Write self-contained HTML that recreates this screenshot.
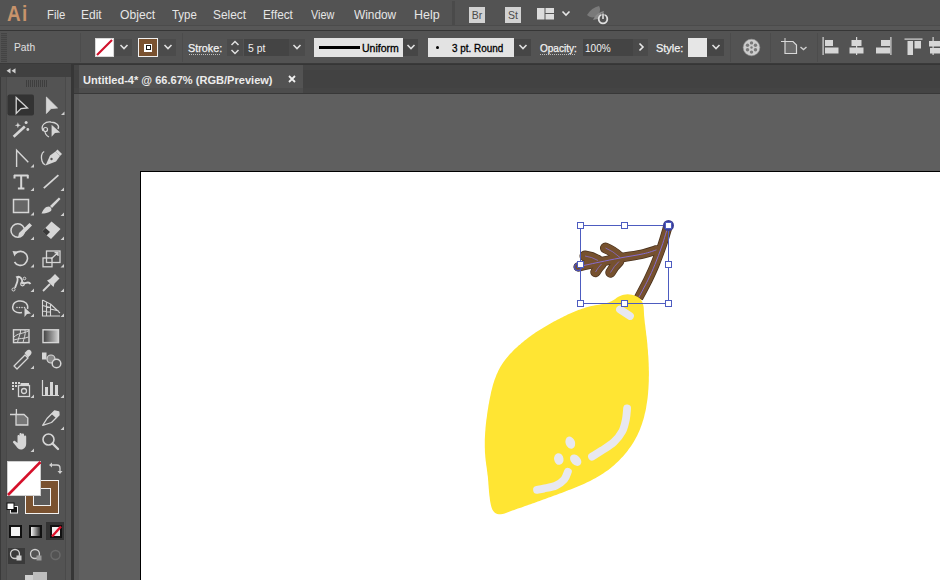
<!DOCTYPE html>
<html><head><meta charset="utf-8">
<style>
*{margin:0;padding:0;box-sizing:border-box}
html,body{width:940px;height:580px;overflow:hidden;background:#535353;font-family:"Liberation Sans",sans-serif}
.a{position:absolute}
.tx{position:absolute;white-space:nowrap;transform-origin:0 0;font-family:"Liberation Sans",sans-serif}
#menu{left:0;top:0;width:940px;height:25px;background:#535353}
.mi{position:absolute;top:7px;font-size:12.5px;color:#e6e6e6;line-height:14px;white-space:nowrap}
#ctrl{left:0;top:31px;width:940px;height:33px;background:#535353}
.lbl{position:absolute;font-size:11px;color:#e8e8e8;line-height:12px;white-space:nowrap}
.dd{position:absolute;top:39px;height:17px;background:#4b4b4b}
#tabbar{left:74px;top:64px;width:866px;height:30px;background:#424242}
#canvas{left:79px;top:94px;width:861px;height:486px;background:#5f5f5f}
#tools{left:0;top:64px;width:74px;height:516px;background:#535353}
</style></head><body>
<!-- menu bar -->
<div class="a" id="menu"></div>
<div class="a" style="left:0;top:25px;width:940px;height:1px;background:#4b4b4b"></div>
<div class="a" style="left:0;top:26px;width:940px;height:4px;background:#575757"></div>
<div class="a" style="left:0;top:30px;width:940px;height:1px;background:#363636"></div>

<div class="tx" id="ailogo" style="left:7px;top:1.5px;font-size:22px;line-height:24px;font-weight:bold;color:#c8936b;letter-spacing:1.5px;transform:scaleX(0.86)">Ai</div>
<div class="a" style="left:452px;top:1px;width:3px;height:24px;background:#4a4a4a"></div>
<div class="a" style="left:469px;top:7px;width:16px;height:16px;background:#d2d2d2"></div>
<div class="a" style="left:470px;top:9px;width:14px;font-size:10.5px;color:#4a4a4a;text-align:center;line-height:12px">Br</div>
<div class="a" style="left:505px;top:7px;width:16px;height:16px;background:#d2d2d2"></div>
<div class="a" style="left:505.5px;top:9px;width:15px;font-size:10.5px;color:#4a4a4a;text-align:center;line-height:12px">St</div>
<svg class="a" style="left:536px;top:7px" width="40" height="14" viewBox="0 0 40 14"><rect x="1" y="1" width="7.5" height="11.5" fill="#dcdcdc"/><rect x="9.5" y="1" width="8.5" height="5" fill="#dcdcdc"/><rect x="9.5" y="7" width="8.5" height="5.5" fill="#dcdcdc"/><path d="M26.5 4.5 L30 8 L33.5 4.5" stroke="#e6e6e6" stroke-width="1.6" fill="none"/></svg>
<svg class="a" style="left:584px;top:2px" width="26" height="24" viewBox="0 0 26 24"><path d="M3 13 C6 8 10 5 15 4 C17 7 16 11 13 14 C10 16 6 16 3 13 Z" fill="#7a7a7a"/><path d="M9 18 C11 13 15 10 20 9 L18 16 Z" fill="#8a8a8a"/><circle cx="19" cy="17" r="4.3" stroke="#e0e0e0" stroke-width="1.8" fill="#535353"/><line x1="19" y1="11" x2="19" y2="17" stroke="#535353" stroke-width="3"/><line x1="19" y1="11.5" x2="19" y2="17" stroke="#e0e0e0" stroke-width="1.6"/></svg>
<div class="tx" style="left:46.89px;top:8.00px;font-size:12.5px;line-height:14.5px;color:#e6e6e6;transform:scaleX(0.905)">File</div>
<div class="tx" style="left:81.44px;top:8.00px;font-size:12.5px;line-height:14.5px;color:#e6e6e6;transform:scaleX(0.957)">Edit</div>
<div class="tx" style="left:119.50px;top:8.00px;font-size:12.5px;line-height:14.5px;color:#e6e6e6;transform:scaleX(0.972)">Object</div>
<div class="tx" style="left:171.50px;top:8.00px;font-size:12.5px;line-height:14.5px;color:#e6e6e6;transform:scaleX(0.915)">Type</div>
<div class="tx" style="left:212.75px;top:8.00px;font-size:12.5px;line-height:14.5px;color:#e6e6e6;transform:scaleX(0.950)">Select</div>
<div class="tx" style="left:263.06px;top:8.00px;font-size:12.5px;line-height:14.5px;color:#e6e6e6;transform:scaleX(0.942)">Effect</div>
<div class="tx" style="left:310.80px;top:8.00px;font-size:12.5px;line-height:14.5px;color:#e6e6e6;transform:scaleX(0.867)">View</div>
<div class="tx" style="left:353.60px;top:8.00px;font-size:12.5px;line-height:14.5px;color:#e6e6e6;transform:scaleX(0.949)">Window</div>
<div class="tx" style="left:414.00px;top:8.00px;font-size:12.5px;line-height:14.5px;color:#e6e6e6;transform:scaleX(1.000)">Help</div>

<!-- control bar -->
<div class="a" id="ctrl"></div>
<div class="a" style="left:0;top:63px;width:940px;height:1px;background:#3a3a3a"></div>
<div class="a" style="left:1px;top:33px;width:6px;height:29px;background:repeating-linear-gradient(#444 0 1px,#4f4f4f 1px 2px)"></div>
<div class="tx" style="left:14.27px;top:41.80px;font-size:10px;line-height:12px;color:#e0e0e0;transform:scaleX(1.026)">Path</div>
<div class="a" style="left:80px;top:33px;width:1px;height:29px;background:#4c4c4c"></div>
<!-- fill swatch -->
<div class="a" style="left:95px;top:38px;width:19px;height:19px;background:#fff;border:1px solid #d8d8d8;overflow:hidden"></div>
<svg class="a" style="left:95px;top:38px" width="19" height="19"><line x1="2" y1="17" x2="17" y2="2" stroke="#d0112b" stroke-width="2.2"/></svg>
<div class="dd" style="left:115px;width:17px"></div>
<svg class="a" style="left:118.5px;top:43px" width="10" height="8" viewBox="0 0 10 8"><path d="M1.5 2 L5 5.5 L8.5 2" stroke="#e0e0e0" stroke-width="1.6" fill="none"/></svg>
<!-- stroke swatch -->
<div class="a" style="left:138px;top:38px;width:20px;height:19px;background:#7a5230;border:1px solid #f0f0f0"></div>
<div class="a" style="left:144px;top:43.5px;width:8px;height:8px;background:#fff"></div>
<div class="a" style="left:145.5px;top:45px;width:5px;height:5px;background:#1a1a1a"></div>
<div class="a" style="left:146.5px;top:46px;width:3px;height:3px;background:#fff"></div>
<div class="dd" style="left:159px;width:17px"></div>
<svg class="a" style="left:162.5px;top:43px" width="10" height="8" viewBox="0 0 10 8"><path d="M1.5 2 L5 5.5 L8.5 2" stroke="#e0e0e0" stroke-width="1.6" fill="none"/></svg>
<div class="a" style="left:182px;top:33px;width:1px;height:29px;background:#4c4c4c"></div>
<div class="tx" style="left:187.57px;top:42.30px;font-size:10.5px;line-height:12.5px;color:#f2f2f2;-webkit-text-stroke:0.25px #f2f2f2;transform:scaleX(1.029)">Stroke:</div>
<div class="a" style="left:189px;top:54px;width:32px;height:1px;background:repeating-linear-gradient(90deg,#bdbdbd 0 1px,transparent 1px 2px)"></div>
<div class="dd" style="left:227px;width:16px;background:#4b4b4b"></div>
<svg class="a" style="left:227px;top:38px" width="16" height="19" viewBox="0 0 16 19"><path d="M4.5 7 L8 3.5 L11.5 7" stroke="#e0e0e0" stroke-width="1.5" fill="none"/><path d="M4.5 12 L8 15.5 L11.5 12" stroke="#e0e0e0" stroke-width="1.5" fill="none"/></svg>
<div class="dd" style="left:244px;width:45px;background:#444"></div>
<div class="tx" style="left:248.20px;top:41.70px;font-size:10.5px;line-height:12.5px;color:#f0f0f0;transform:scaleX(0.988)">5 pt</div>
<div class="dd" style="left:289px;width:16px"></div>
<svg class="a" style="left:292px;top:43px" width="10" height="8" viewBox="0 0 10 8"><path d="M1.5 2 L5 5.5 L8.5 2" stroke="#e0e0e0" stroke-width="1.6" fill="none"/></svg>
<!-- uniform -->
<div class="a" style="left:314px;top:38px;width:89px;height:19px;background:#e3e3e3"></div>
<div class="a" style="left:319px;top:46px;width:41px;height:3px;background:#000"></div>
<div class="tx" style="left:362.30px;top:41.70px;font-size:10.5px;line-height:12.5px;color:#000;-webkit-text-stroke:0.3px #000;transform:scaleX(1.003)">Uniform</div>
<div class="dd" style="left:403px;width:15px;background:#464646"></div>
<svg class="a" style="left:405.5px;top:43px" width="10" height="8" viewBox="0 0 10 8"><path d="M1.5 2 L5 5.5 L8.5 2" stroke="#e0e0e0" stroke-width="1.6" fill="none"/></svg>
<!-- round -->
<div class="a" style="left:428px;top:38px;width:86px;height:19px;background:#e3e3e3"></div>
<div class="a" style="left:436px;top:46px;width:3px;height:3px;background:#000;border-radius:1.5px"></div>
<div class="tx" style="left:452.00px;top:41.70px;font-size:10.5px;line-height:12.5px;color:#000;-webkit-text-stroke:0.3px #000;transform:scaleX(0.944)">3 pt. Round</div>
<div class="dd" style="left:514px;width:17px;background:#464646"></div>
<svg class="a" style="left:517.5px;top:43px" width="10" height="8" viewBox="0 0 10 8"><path d="M1.5 2 L5 5.5 L8.5 2" stroke="#e0e0e0" stroke-width="1.6" fill="none"/></svg>
<div class="tx" style="left:539.70px;top:42.00px;font-size:10.5px;line-height:12.5px;color:#f2f2f2;-webkit-text-stroke:0.25px #f2f2f2;transform:scaleX(0.953)">Opacity:</div>
<div class="a" style="left:540px;top:54px;width:36px;height:1px;background:repeating-linear-gradient(90deg,#bdbdbd 0 1px,transparent 1px 2px)"></div>
<div class="dd" style="left:583px;width:50px;background:#444"></div>
<div class="tx" style="left:585.34px;top:41.70px;font-size:10.5px;line-height:12.5px;color:#f0f0f0;transform:scaleX(0.958)">100%</div>
<div class="dd" style="left:633px;width:15px;background:#4a4a4a"></div>
<svg class="a" style="left:636px;top:42px" width="10" height="10" viewBox="0 0 10 10"><path d="M3.5 1.5 L7 5 L3.5 8.5" stroke="#e8e8e8" stroke-width="1.6" fill="none"/></svg>
<div class="tx" style="left:655.66px;top:42.00px;font-size:10.5px;line-height:12.5px;color:#f2f2f2;-webkit-text-stroke:0.25px #f2f2f2;transform:scaleX(1.037)">Style:</div>
<div class="a" style="left:688px;top:38px;width:19px;height:19px;background:#e6e6e6"></div>
<div class="dd" style="left:707px;width:17px;background:#464646"></div>
<svg class="a" style="left:710.5px;top:43px" width="10" height="8" viewBox="0 0 10 8"><path d="M1.5 2 L5 5.5 L8.5 2" stroke="#e0e0e0" stroke-width="1.6" fill="none"/></svg>
<div class="a" style="left:730px;top:33px;width:1px;height:29px;background:#4c4c4c"></div>
<svg class="a" style="left:742px;top:38px" width="19" height="19" viewBox="0 0 19 19"><circle cx="9.5" cy="9.5" r="8.3" fill="#cdcdcd"/><circle cx="9.5" cy="9.5" r="8.3" fill="none" stroke="#9a9a9a" stroke-width="0.6"/><circle cx="9.50" cy="4.90" r="1.7" fill="#7a7a7a"/><circle cx="13.48" cy="7.20" r="1.7" fill="#7a7a7a"/><circle cx="13.48" cy="11.80" r="1.7" fill="#7a7a7a"/><circle cx="9.50" cy="14.10" r="1.7" fill="#7a7a7a"/><circle cx="5.52" cy="11.80" r="1.7" fill="#7a7a7a"/><circle cx="5.52" cy="7.20" r="1.7" fill="#7a7a7a"/><circle cx="9.5" cy="9.5" r="1.2" fill="#7a7a7a"/></svg>
<div class="a" style="left:770px;top:33px;width:1px;height:29px;background:#4c4c4c"></div>
<svg class="a" style="left:780px;top:37px" width="30" height="20" viewBox="0 0 30 20"><path d="M5 4.5 H13 L16.5 8 V16.5 H5 Z" fill="#6a6a6a" stroke="#d8d8d8" stroke-width="1.2"/><line x1="1" y1="4.5" x2="5" y2="4.5" stroke="#d8d8d8" stroke-width="1"/><line x1="5" y1="1" x2="5" y2="4.5" stroke="#d8d8d8" stroke-width="1"/><path d="M20.5 10 L23.5 12.5 L26.5 10" stroke="#d0d0d0" stroke-width="1.4" fill="none"/></svg>
<div class="a" style="left:817px;top:33px;width:1px;height:29px;background:#4c4c4c"></div>
<svg class="a" style="left:820px;top:36px" width="120" height="22" viewBox="0 0 120 22">
<g fill="#d6d6d6">
<rect x="2.5" y="1" width="1.2" height="18"/><rect x="5" y="4" width="8" height="6"/><rect x="5" y="11.5" width="13.5" height="6"/>
<rect x="36" y="1" width="1.2" height="18"/><rect x="31.5" y="4" width="10" height="6"/><rect x="29.5" y="11.5" width="14" height="6"/>
<rect x="70.3" y="1" width="1.2" height="18"/><rect x="61" y="4" width="9" height="6"/><rect x="56" y="11.5" width="14" height="6"/>
<rect x="84.5" y="2.5" width="18" height="1.2"/><rect x="87.5" y="5" width="5.5" height="14"/><rect x="94.5" y="5" width="6.5" height="7.5"/>
<rect x="112.5" y="1" width="1.2" height="18"/><rect x="109" y="5" width="11" height="5.5"/><rect x="110" y="12" width="10" height="5.5"/>
</g></svg>
<!-- tools panel -->
<div class="a" id="tools"></div>
<div class="a" style="left:0;top:64px;width:72px;height:13px;background:#404040"></div>
<svg class="a" style="left:5px;top:67px" width="12" height="8" viewBox="0 0 12 8"><path d="M1.5 3.8 L5.5 1.2 V6.4 Z M6.5 3.8 L10.5 1.2 V6.4 Z" fill="#d0d0d0"/></svg>
<div class="a" style="left:25.5px;top:80px;width:21px;height:7px;background:repeating-linear-gradient(90deg,#3e3e3e 0 1px,transparent 1px 2px)"></div>
<div class="a" style="left:0;top:77px;width:1px;height:503px;background:#3a3a3a"></div>
<div class="a" style="left:1px;top:77px;width:5px;height:503px;background:#4e4e4e"></div>
<div class="a" style="left:6px;top:77px;width:1px;height:503px;background:#484848"></div>
<div class="a" style="left:65px;top:77px;width:1px;height:503px;background:#4a4a4a"></div>
<div class="a" style="left:66px;top:77px;width:5px;height:503px;background:#555"></div>
<div class="a" style="left:71px;top:64px;width:3px;height:516px;background:#363636"></div>
<div class="a" style="left:74px;top:64px;width:5px;height:516px;background:#575757"></div>
<svg class="a" style="left:0;top:0" width="74" height="580" viewBox="0 0 74 580">
<rect x="7.5" y="94.5" width="26.5" height="21" rx="2" fill="#333"/>
<path d="M16.2 97.5 L27.5 108 L21 108.6 L16.2 113.5 Z" fill="#2a2a2a" stroke="#d6d6d6" stroke-width="1.3" stroke-linejoin="miter"/>
<path d="M46.4 97 L57.5 108 L51 108.6 L46.4 113.5 Z" fill="#d6d6d6" stroke="#d6d6d6" stroke-width="0.8"/>
<path d="M61 115 L64.5 115 L64.5 111.5 Z" fill="#cfcfcf"/>
<line x1="13.6" y1="136.8" x2="24.8" y2="126.5" stroke="#d6d6d6" stroke-width="2.6"/>
<path d="M17.9 122.2 L18.7 124.4 L21 125.2 L18.7 126 L17.9 128.2 L17.1 126 L14.8 125.2 L17.1 124.4 Z" fill="#d6d6d6"/>
<circle cx="26.1" cy="122.6" r="1.5" fill="#d6d6d6"/><circle cx="27.8" cy="129.5" r="1.4" fill="#d6d6d6"/>
<path d="M43 131 C40 125 46 121 51 122 C56 122.5 60 125 58 129" stroke="#d6d6d6" stroke-width="1.3" fill="none"/>
<circle cx="45.5" cy="129.5" r="2" stroke="#d6d6d6" stroke-width="1.2" fill="none"/>
<path d="M45 131 C45 134 47 136 49 137" stroke="#d6d6d6" stroke-width="1.2" fill="none"/>
<path d="M51.6 124.8 L60.2 132.5 L55 133 L51.6 136.8 Z" fill="#d6d6d6"/>
<path d="M16.6 167 L16.6 150.2 L28.3 162.3" stroke="#d6d6d6" stroke-width="1.4" fill="none"/>
<path d="M30.5 167.5 L34.0 167.5 L34.0 164.0 Z" fill="#cfcfcf"/>
<path d="M44.2 151.5 C41 153 41 158 42 161 C42.5 163 44 164.5 45.5 165" stroke="#d6d6d6" stroke-width="1.3" fill="none"/>
<path d="M45.5 165.5 L50 155.5 L55.5 151.5 L60 156 L56 161.5 Z" fill="#d6d6d6"/>
<path d="M55.5 151.5 L57.5 149.5 L62 154 L60 156 Z" fill="#d6d6d6"/>
<circle cx="51.5" cy="159" r="1.2" fill="#555"/>
<path d="M14 175.6 H28.3 M14.5 175 V178.5 M27.8 175 V178.5 M21.2 175.6 V188.6 M17.9 188.6 H24.4" stroke="#d6d6d6" stroke-width="2" fill="none"/>
<path d="M30.5 191 L34.0 191 L34.0 187.5 Z" fill="#cfcfcf"/>
<line x1="43.8" y1="188.1" x2="58.4" y2="175.2" stroke="#d6d6d6" stroke-width="1.8"/>
<path d="M60.5 191 L64.0 191 L64.0 187.5 Z" fill="#cfcfcf"/>
<rect x="13.5" y="199.5" width="15" height="13" fill="#666" stroke="#d6d6d6" stroke-width="1.5"/>
<path d="M30.5 215.5 L34.0 215.5 L34.0 212.0 Z" fill="#cfcfcf"/>
<path d="M50 206 L58.9 197.5 L60.5 199 L52 208 Z" fill="#d6d6d6"/>
<path d="M41.5 213.5 C43 210 45 206.5 49 206.5 C51.5 207 52 209.5 51 211 C48 213 45 213.5 41.5 213.5 Z" fill="#d6d6d6"/>
<path d="M60.5 216 L64.0 216 L64.0 212.5 Z" fill="#cfcfcf"/>
<circle cx="17.8" cy="230.5" r="6.8" stroke="#d6d6d6" stroke-width="1.5" fill="#5c5c5c"/>
<path d="M17.9 237.7 L19 233 L29.5 223 L32 225.5 L21.5 236 Z" fill="#d6d6d6"/>
<path d="M30.5 240 L34.0 240 L34.0 236.5 Z" fill="#cfcfcf"/>
<path d="M42 231.5 L51.5 221.5 L60.5 229 L51 239 Z" fill="#d6d6d6"/>
<path d="M42 231.5 L45.5 228 L50 232 L46.5 235.5 Z" fill="#3a3a3a"/>
<path d="M60.5 240 L64.0 240 L64.0 236.5 Z" fill="#cfcfcf"/>
<path d="M15.5 253.5 A7 7 0 1 1 14.5 262" stroke="#d6d6d6" stroke-width="1.6" fill="none"/>
<path d="M12.5 251 L17.5 251.5 L14.5 256.5 Z" fill="#d6d6d6"/>
<path d="M30.5 267.5 L34.0 267.5 L34.0 264.0 Z" fill="#cfcfcf"/>
<rect x="46.5" y="251" width="13.5" height="11.5" stroke="#d6d6d6" stroke-width="1.3" fill="none"/>
<rect x="43" y="258" width="9" height="8.8" stroke="#d6d6d6" stroke-width="1.3" fill="none"/>
<path d="M51 259 L58 252.5 M54.5 252.5 H58 V256" stroke="#d6d6d6" stroke-width="1.3" fill="none"/>
<path d="M60.5 267.5 L64.0 267.5 L64.0 264.0 Z" fill="#cfcfcf"/>
<path d="M15 288 C17 282 19 280 17 277 C20 276 23 279 22 283 C25 285 28 280 30.5 284" stroke="#d6d6d6" stroke-width="1.8" fill="none"/>
<circle cx="13.5" cy="289.5" r="1.5" stroke="#d6d6d6" stroke-width="1" fill="none"/>
<circle cx="22.5" cy="284" r="1.8" stroke="#d6d6d6" stroke-width="1.2" fill="none"/>
<circle cx="24.5" cy="278.5" r="1.3" stroke="#d6d6d6" stroke-width="1" fill="none"/>
<path d="M30.5 292 L34.0 292 L34.0 288.5 Z" fill="#cfcfcf"/>
<path d="M50 279 L55 274 L59.5 278.5 L54.5 283.5 L53.5 287 L47 280.5 Z" fill="#d6d6d6"/>
<line x1="43" y1="291" x2="50" y2="284" stroke="#d6d6d6" stroke-width="1.8"/>
<path d="M60.5 292 L64.0 292 L64.0 288.5 Z" fill="#cfcfcf"/>
<path d="M22 312.5 C16 314 11.5 310 13 305.5 C14.5 300.5 22 299.5 26 303 C28 305 28 307 27.5 309" stroke="#d6d6d6" stroke-width="1.5" fill="none"/>
<g fill="#d6d6d6"><circle cx="17" cy="307.5" r="0.8"/><circle cx="19.5" cy="307.5" r="0.8"/><circle cx="22" cy="307.5" r="0.8"/><circle cx="24.5" cy="307.5" r="0.8"/></g>
<path d="M24.5 307.5 L31 313.5 L27 314 L24.5 317 Z" fill="#d6d6d6"/>
<path d="M30.5 317 L34.0 317 L34.0 313.5 Z" fill="#cfcfcf"/>
<path d="M42.5 300 V316 H60 M42.5 300 L50.5 304 V316 M42.5 305.5 L50.5 307.5 M42.5 311 L50.5 312 M46.5 302 V316 M50.5 304 L60 313 M50.5 309 L59 311" stroke="#d6d6d6" stroke-width="1.1" fill="none"/>
<path d="M60.5 317 L64.0 317 L64.0 313.5 Z" fill="#cfcfcf"/>
<rect x="13.5" y="329.8" width="15.5" height="12.8" stroke="#d6d6d6" stroke-width="1.4" fill="#5a5a5a"/>
<path d="M14 337 C18 333 22 334 28.5 331 M17.5 342.5 C18 338 21 334 20.5 330 M23 342.5 C23.5 339 26 335 25 330 M14 340 C19 338 24 339 28.5 337" stroke="#d6d6d6" stroke-width="1" fill="none"/>
<defs><linearGradient id="gr" x1="0" x2="1"><stop offset="0" stop-color="#3e3e3e"/><stop offset="1" stop-color="#d0d0d0"/></linearGradient>
<linearGradient id="gr2" x1="0" x2="1"><stop offset="0" stop-color="#f0f0f0"/><stop offset="1" stop-color="#333"/></linearGradient></defs>
<rect x="43" y="329.8" width="15.5" height="12.8" stroke="#d6d6d6" stroke-width="1.4" fill="url(#gr)"/>
<path d="M14 366 L25 355 L28 358 L17 369 Z" stroke="#d6d6d6" stroke-width="1.3" fill="none" stroke-linejoin="round"/>
<path d="M24.5 353 L27 350.5 C28 349.5 30 349.5 31 351 C32 352 31.5 354 30.5 355 L28 357.5 Z" fill="#d6d6d6"/>
<path d="M30.5 369 L34.0 369 L34.0 365.5 Z" fill="#cfcfcf"/>
<rect x="42" y="352.5" width="4.5" height="7" fill="#d6d6d6"/>
<circle cx="51" cy="359" r="4" fill="#888" stroke="#d6d6d6" stroke-width="1.2"/>
<circle cx="56.5" cy="363.5" r="4.3" fill="#555" stroke="#d6d6d6" stroke-width="1.5"/>
<g fill="#d6d6d6"><rect x="12" y="382" width="2" height="2"/><rect x="15" y="382" width="2" height="2"/><rect x="18" y="382" width="2" height="2"/><rect x="12" y="385" width="2" height="2"/><rect x="15" y="385" width="2" height="2"/><rect x="12" y="388" width="2" height="2"/></g>
<rect x="20.5" y="383" width="8.5" height="2.5" fill="#d6d6d6"/>
<rect x="18.5" y="385.5" width="11" height="11" stroke="#d6d6d6" stroke-width="1.3" fill="none"/>
<circle cx="24" cy="391" r="2.5" stroke="#d6d6d6" stroke-width="1.3" fill="none"/>
<path d="M30.5 398 L34.0 398 L34.0 394.5 Z" fill="#cfcfcf"/>
<path d="M42.5 380 V395.5 H59" stroke="#d6d6d6" stroke-width="1.2" fill="none"/>
<rect x="45" y="387" width="3" height="8" fill="#d6d6d6"/><rect x="50" y="382" width="3" height="13" fill="#d6d6d6"/><rect x="55" y="385" width="3" height="10" fill="#d6d6d6"/>
<path d="M60.5 398 L64.0 398 L64.0 394.5 Z" fill="#cfcfcf"/>
<path d="M10 414.5 H16 M16.4 409 V414.5" stroke="#d6d6d6" stroke-width="1.3"/>
<path d="M16 414.5 H24 L27.8 418 V425 H16 Z" fill="#777" stroke="#d6d6d6" stroke-width="1.3"/>
<path d="M42.7 425.3 L47 418.5 L54.5 411 L58.8 412 L59 415 L51.5 422.5 Z" stroke="#d6d6d6" stroke-width="1.3" fill="none" stroke-linejoin="round"/>
<path d="M54.5 411 L58.8 412 L59 415 L56 418 L51.5 414 Z" fill="#d6d6d6"/>
<path d="M60.5 430 L64.0 430 L64.0 426.5 Z" fill="#cfcfcf"/>
<path d="M15 441 L17.5 443 L17.5 436 C17.5 434.5 19.5 434.5 19.5 436 L19.5 440 L19.5 434 C19.5 432.5 21.7 432.5 21.7 434 L21.7 440 L21.7 434.5 C21.7 433 24 433 24 434.5 L24 440.5 L24 436.5 C24 435 26.2 435 26.2 436.5 L26.2 443.5 C26.2 447 24 449.5 21 449.5 C18.5 449.5 17.5 448 16 446 L13 442.5 C12.5 441.5 14 440 15 441 Z" fill="#d6d6d6"/>
<path d="M30.5 452 L34.0 452 L34.0 448.5 Z" fill="#cfcfcf"/>
<circle cx="48.5" cy="439.5" r="5.5" stroke="#d6d6d6" stroke-width="1.6" fill="none"/>
<line x1="52.5" y1="443.5" x2="58" y2="449" stroke="#d6d6d6" stroke-width="2.4" stroke-linecap="round"/>
</svg>
<!-- fill stroke -->
<div class="a" style="left:25px;top:480px;width:34px;height:34px;background:#7a5230;border:1px solid #f2f2f2"></div>
<div class="a" style="left:33px;top:488px;width:18px;height:18px;background:#5a5a5a;border:1px solid #f2f2f2"></div>
<div class="a" style="left:7px;top:461px;width:34px;height:35px;background:#fff;border:1px solid #cfcfcf"></div>
<svg class="a" style="left:7px;top:461px" width="34" height="35"><line x1="1" y1="34" x2="33.5" y2="1" stroke="#d5102a" stroke-width="2.6"/></svg>
<svg class="a" style="left:48px;top:461px" width="16" height="14" viewBox="0 0 16 14"><path d="M3 4 H9 C11 4 12 5 12 7 V11" stroke="#cfcfcf" stroke-width="1.3" fill="none"/><path d="M1 4 L4 1.5 V6.5 Z M9.5 10 H14.5 L12 13 Z" fill="#cfcfcf"/></svg>
<svg class="a" style="left:6px;top:502px" width="13" height="12" viewBox="0 0 13 12"><rect x="4.5" y="4.5" width="7" height="6.5" fill="#111" stroke="#eee" stroke-width="1"/><rect x="1" y="1" width="7" height="6.5" fill="#fff" stroke="#111" stroke-width="1"/></svg>
<div class="a" style="left:9px;top:525px;width:13px;height:13px;background:#f2f2f2;border:2px solid #111"></div>
<div class="a" style="left:29px;top:525px;width:13px;height:13px;background:linear-gradient(90deg,#f4f4f4,#333);border:2px solid #111"></div>
<div class="a" style="left:46px;top:522px;width:18px;height:18px;background:#333"></div>
<div class="a" style="left:49.5px;top:525px;width:12.5px;height:13px;background:#f2f2f2;border:2px solid #111;overflow:hidden"></div>
<svg class="a" style="left:49.5px;top:525px" width="13" height="13"><line x1="2" y1="11.5" x2="11" y2="1.5" stroke="#e0102a" stroke-width="2.4"/></svg>
<div class="a" style="left:7.5px;top:547.5px;width:17.5px;height:16px;background:#3a3a3a"></div>
<svg class="a" style="left:0;top:540px" width="74" height="40" viewBox="0 540 74 40">
<circle cx="15" cy="554" r="4.5" stroke="#d0d0d0" stroke-width="1.3" fill="none"/><rect x="16.5" y="555.5" width="5" height="5" fill="#cfcfcf"/>
<circle cx="35" cy="554" r="4.5" stroke="#d0d0d0" stroke-width="1.3" fill="none"/><rect x="36.5" y="555.5" width="5" height="5" fill="#9a9a9a"/>
<circle cx="55.5" cy="555" r="4.5" stroke="#6a6a6a" stroke-width="1.5" fill="none"/>
<rect x="25" y="575" width="8" height="6" fill="#cfcfcf"/><rect x="33" y="572" width="14" height="9" fill="#bdbdbd"/>
</svg>
<!-- tab bar -->
<div class="a" id="tabbar"></div>
<div class="a" style="left:74px;top:64px;width:866px;height:1px;background:#363636"></div>
<div class="a" style="left:74px;top:65px;width:866px;height:5px;background:#454545"></div>
<div class="a" style="left:74px;top:88px;width:866px;height:5px;background:#444"></div>
<div class="a" style="left:79px;top:65px;width:224px;height:23px;background:#535353"></div>
<div class="a" style="left:79px;top:88px;width:224px;height:5px;background:#4d4d4d"></div>
<div class="a" style="left:74px;top:93px;width:866px;height:1px;background:#383838"></div>
<div class="tx" style="left:83.40px;top:73.70px;font-size:11px;line-height:13px;font-weight:bold;color:#ececec;transform:scaleX(1.005)">Untitled-4* @ 66.67% (RGB/Preview)</div>
<svg class="a" style="left:288px;top:75px" width="8" height="8" viewBox="0 0 8 8"><path d="M1 1 L7 7 M7 1 L1 7" stroke="#f0f0f0" stroke-width="1.8"/></svg>
<!-- canvas -->
<div class="a" id="canvas"></div>
<div class="a" style="left:140px;top:171px;width:800px;height:409px;background:#fff;border-left:1px solid #000;border-top:1px solid #000"></div>

<svg class="a" style="left:0;top:0" width="940" height="580" viewBox="0 0 940 580">



<g stroke="#4a321e" stroke-width="9.5" stroke-linecap="round" fill="none"><path d="M668.0 226.0 C667.0 229.3 664.1 239.6 661.9 246.0 C659.7 252.4 657.2 258.9 654.9 264.6 C652.6 270.3 650.5 274.7 647.9 280.1 C645.2 285.5 640.5 294.2 638.5 298" stroke-linecap="butt"/>
<path d="M656.4 249.9 C654.2 250.6 649.4 252.5 643.3 253.8 C637.2 255.2 627.2 256.6 620.0 258.0 C612.8 259.4 605.7 260.8 600.0 262.0 C594.3 263.2 589.8 264.2 586.0 265.0 C582.2 265.8 579.7 266.6 578.2 266.9"/>
<path d="M605.5 248 Q613 251 620 257.5" stroke-width="11.0"/>
<path d="M585 256 Q592 257 598 260.5" stroke-width="11.0"/>
<path d="M595.5 272 Q598 267.5 601.5 264" stroke-width="10.5"/>
<path d="M610.5 272.5 Q614 266 619 261.5" stroke-width="10.5"/></g>
<g stroke="#76512f" stroke-width="8" stroke-linecap="round" fill="none"><path d="M668.0 226.0 C667.0 229.3 664.1 239.6 661.9 246.0 C659.7 252.4 657.2 258.9 654.9 264.6 C652.6 270.3 650.5 274.7 647.9 280.1 C645.2 285.5 640.5 294.2 638.5 298" stroke-linecap="butt"/>
<path d="M656.4 249.9 C654.2 250.6 649.4 252.5 643.3 253.8 C637.2 255.2 627.2 256.6 620.0 258.0 C612.8 259.4 605.7 260.8 600.0 262.0 C594.3 263.2 589.8 264.2 586.0 265.0 C582.2 265.8 579.7 266.6 578.2 266.9"/>
<path d="M605.5 248 Q613 251 620 257.5" stroke-width="9.5"/>
<path d="M585 256 Q592 257 598 260.5" stroke-width="9.5"/>
<path d="M595.5 272 Q598 267.5 601.5 264" stroke-width="9"/>
<path d="M610.5 272.5 Q614 266 619 261.5" stroke-width="9"/></g>
<path fill="#ffe533" d="M611.9 301.0 L613.6 300.0 L615.2 298.9 L616.7 297.8 L618.4 296.8 L620.1 295.9 L621.9 295.2 L623.7 294.7 L625.7 294.4 L627.7 294.3 L629.7 294.4 L631.7 294.7 L633.7 295.2 L635.6 295.9 L637.3 296.8 L638.9 297.8 L640.3 299.1 L641.4 300.5 L642.3 302.1 L643.0 303.9 L643.4 305.7 L643.7 307.6 L643.8 309.6 L643.9 311.6 L644.0 313.6 L644.1 315.6 L644.3 317.6 L644.5 319.6 L644.7 321.5 L644.9 323.4 L645.2 325.3 L645.4 327.3 L645.6 329.2 L645.9 331.1 L646.1 333.0 L646.3 334.9 L646.6 336.8 L646.8 338.8 L647.0 340.7 L647.2 342.6 L647.4 344.5 L647.5 346.5 L647.7 348.4 L647.9 350.3 L648.0 352.3 L648.1 354.2 L648.3 356.1 L648.4 358.0 L648.5 360.0 L648.6 361.9 L648.7 363.9 L648.7 365.8 L648.8 367.7 L648.8 369.7 L648.9 371.6 L648.9 373.6 L648.9 375.5 L648.8 377.4 L648.8 379.4 L648.8 381.3 L648.7 383.3 L648.6 385.2 L648.5 387.2 L648.4 389.1 L648.2 391.1 L648.1 393.0 L647.9 395.0 L647.7 396.9 L647.5 398.8 L647.2 400.8 L646.9 402.7 L646.6 404.6 L646.3 406.5 L646.0 408.5 L645.6 410.4 L645.2 412.3 L644.7 414.1 L644.3 416.0 L643.8 417.9 L643.3 419.8 L642.7 421.6 L642.1 423.4 L641.5 425.3 L640.8 427.1 L640.1 428.9 L639.4 430.7 L638.6 432.4 L637.8 434.2 L637.0 435.9 L636.1 437.6 L635.2 439.3 L634.2 441.0 L633.2 442.7 L632.2 444.3 L631.1 445.9 L630.0 447.5 L628.8 449.1 L627.7 450.7 L626.5 452.2 L625.2 453.7 L624.0 455.2 L622.7 456.7 L621.3 458.1 L620.0 459.6 L618.6 460.9 L617.2 462.3 L615.8 463.6 L614.3 464.9 L612.8 466.2 L611.3 467.5 L609.8 468.7 L608.3 469.9 L606.7 471.0 L605.1 472.1 L603.5 473.2 L601.9 474.3 L600.3 475.3 L598.6 476.3 L596.9 477.3 L595.3 478.2 L593.6 479.1 L591.9 480.0 L590.1 480.9 L588.4 481.7 L586.7 482.6 L584.9 483.4 L583.2 484.2 L581.4 485.0 L579.6 485.7 L577.8 486.5 L576.0 487.2 L574.2 488.0 L572.4 488.7 L570.6 489.4 L568.8 490.1 L567.0 490.8 L565.2 491.5 L563.4 492.2 L561.5 492.9 L559.7 493.6 L557.9 494.3 L556.1 494.9 L554.2 495.6 L552.4 496.3 L550.6 497.0 L548.7 497.6 L546.9 498.3 L545.1 499.0 L543.3 499.6 L541.4 500.3 L539.6 500.9 L537.8 501.6 L536.0 502.2 L534.1 502.9 L532.3 503.5 L530.5 504.2 L528.7 504.8 L526.9 505.4 L525.1 506.1 L523.3 506.7 L521.5 507.4 L519.7 508.0 L517.9 508.6 L516.0 509.3 L514.2 510.0 L512.3 510.6 L510.4 511.3 L508.5 512.0 L506.6 512.7 L504.6 513.4 L502.7 513.9 L500.8 514.2 L498.9 514.2 L497.2 513.9 L495.6 513.2 L494.3 512.2 L493.1 510.8 L492.2 509.2 L491.5 507.3 L491.0 505.4 L490.6 503.4 L490.2 501.4 L489.9 499.4 L489.7 497.5 L489.4 495.5 L489.2 493.6 L489.0 491.7 L488.9 489.7 L488.7 487.8 L488.6 485.9 L488.4 484.0 L488.3 482.1 L488.1 480.1 L488.0 478.2 L487.8 476.3 L487.5 474.4 L487.3 472.4 L487.0 470.5 L486.8 468.6 L486.5 466.6 L486.2 464.7 L486.0 462.7 L485.7 460.8 L485.5 458.8 L485.3 456.9 L485.2 454.9 L485.0 453.0 L484.9 451.1 L484.9 449.1 L484.8 447.2 L484.8 445.3 L484.8 443.3 L484.8 441.4 L484.8 439.5 L484.9 437.6 L485.0 435.7 L485.1 433.7 L485.2 431.8 L485.4 429.9 L485.5 428.0 L485.7 426.0 L485.9 424.1 L486.1 422.2 L486.3 420.3 L486.6 418.4 L486.9 416.4 L487.1 414.5 L487.4 412.6 L487.7 410.6 L488.0 408.7 L488.3 406.8 L488.6 404.8 L489.0 402.9 L489.3 401.0 L489.7 399.0 L490.1 397.1 L490.5 395.2 L490.9 393.2 L491.3 391.3 L491.8 389.4 L492.3 387.5 L492.8 385.6 L493.3 383.8 L493.9 381.9 L494.5 380.1 L495.2 378.2 L495.9 376.4 L496.6 374.6 L497.4 372.9 L498.2 371.1 L499.0 369.4 L499.9 367.7 L500.9 366.1 L501.9 364.4 L503.0 362.8 L504.1 361.2 L505.2 359.7 L506.4 358.2 L507.7 356.7 L508.9 355.2 L510.2 353.8 L511.6 352.4 L512.9 351.0 L514.3 349.6 L515.7 348.3 L517.2 346.9 L518.6 345.6 L520.1 344.4 L521.6 343.1 L523.0 341.9 L524.6 340.6 L526.1 339.4 L527.6 338.3 L529.2 337.1 L530.7 335.9 L532.3 334.8 L533.9 333.7 L535.5 332.6 L537.1 331.5 L538.8 330.5 L540.4 329.4 L542.1 328.4 L543.7 327.4 L545.4 326.4 L547.1 325.4 L548.8 324.4 L550.5 323.5 L552.2 322.5 L553.9 321.6 L555.6 320.7 L557.3 319.8 L559.0 318.9 L560.8 318.0 L562.5 317.2 L564.2 316.3 L566.0 315.5 L567.7 314.6 L569.5 313.8 L571.3 313.0 L573.0 312.3 L574.8 311.5 L576.6 310.8 L578.4 310.1 L580.2 309.4 L582.0 308.8 L583.9 308.2 L585.7 307.6 L587.6 307.1 L589.5 306.6 L591.3 306.1 L593.2 305.7 L595.2 305.3 L597.1 305.0 L599.0 304.7 L601.0 304.3 L602.9 304.0 L604.8 303.6 L606.6 303.1 L608.5 302.5 L610.2 301.8 Z"/>
<g stroke="#e8e8f0" stroke-width="7.8" stroke-linecap="round" fill="none">
<path d="M620 309.5 L630 316"/>
<path d="M627.1 408.3 C626.9 410.1 626.7 415.4 625.9 419.2 C625.1 423.0 624.3 427.4 622.3 431.2 C620.3 435.0 617.2 438.9 613.8 442.1 C610.4 445.3 605.3 448.2 601.7 450.6 C598.1 453.0 593.6 455.6 592.0 456.6"/>
<path d="M567.9 471.7 C567.3 473.0 566.2 477.2 564.2 479.5 C562.2 481.8 559.2 484.1 555.8 485.6 C552.4 487.1 546.8 487.9 543.7 488.6 C540.6 489.3 538.1 489.6 537.0 489.8"/>
</g>
<g fill="#e8e8f0">
<ellipse cx="570.3" cy="442.7" rx="4.7" ry="6.3" transform="rotate(-20 570.3 442.7)"/>
<ellipse cx="558.8" cy="459" rx="4.7" ry="5.9" transform="rotate(-10 558.8 459)"/>
<ellipse cx="575.7" cy="460.2" rx="4.7" ry="6.5" transform="rotate(-45 575.7 460.2)"/>
</g>
<g stroke="#8a6fe0" stroke-width="1" fill="none" opacity="0.9">
<path d="M668.0 226.0 C667.0 229.3 664.1 239.6 661.9 246.0 C659.7 252.4 657.2 258.9 654.9 264.6 C652.6 270.3 650.5 274.7 647.9 280.1 C645.2 285.5 640.5 294.2 639.0 297.0"/>
<path d="M656.4 249.9 C654.2 250.6 649.4 252.5 643.3 253.8 C637.2 255.2 627.2 256.6 620.0 258.0 C612.8 259.4 605.7 260.8 600.0 262.0 C594.3 263.2 589.8 264.2 586.0 265.0 C582.2 265.8 578.7 266.6 577.2 266.9"/>
<path d="M605.5 248 Q613 251 620 257.5 M585 256 Q592 257 598 260.5 M595.5 272 Q598 267.5 601.5 264 M610.5 272.5 Q614 266 619 261.5" stroke-width="0.8"/></g>
<g stroke="#4d5cc0" stroke-width="1" fill="none">
<rect x="580.5" y="225.5" width="88" height="78"/>
</g>
<circle cx="668.5" cy="225.5" r="4.5" fill="none" stroke="#3c3f98" stroke-width="2"/>
<circle cx="578" cy="267" r="3.5" fill="none" stroke="#4a50b8" stroke-width="1.5"/>
<g fill="#fff" stroke="#4d5cc0" stroke-width="1"><rect x="577.5" y="222.5" width="6" height="6"/>
<rect x="621.5" y="222.5" width="6" height="6"/>
<rect x="665.5" y="222.5" width="6" height="6"/>
<rect x="577.5" y="261.5" width="6" height="6"/>
<rect x="665.5" y="261.5" width="6" height="6"/>
<rect x="577.5" y="300.5" width="6" height="6"/>
<rect x="621.5" y="300.5" width="6" height="6"/>
<rect x="665.5" y="300.5" width="6" height="6"/></g>
</svg>
</body></html>
